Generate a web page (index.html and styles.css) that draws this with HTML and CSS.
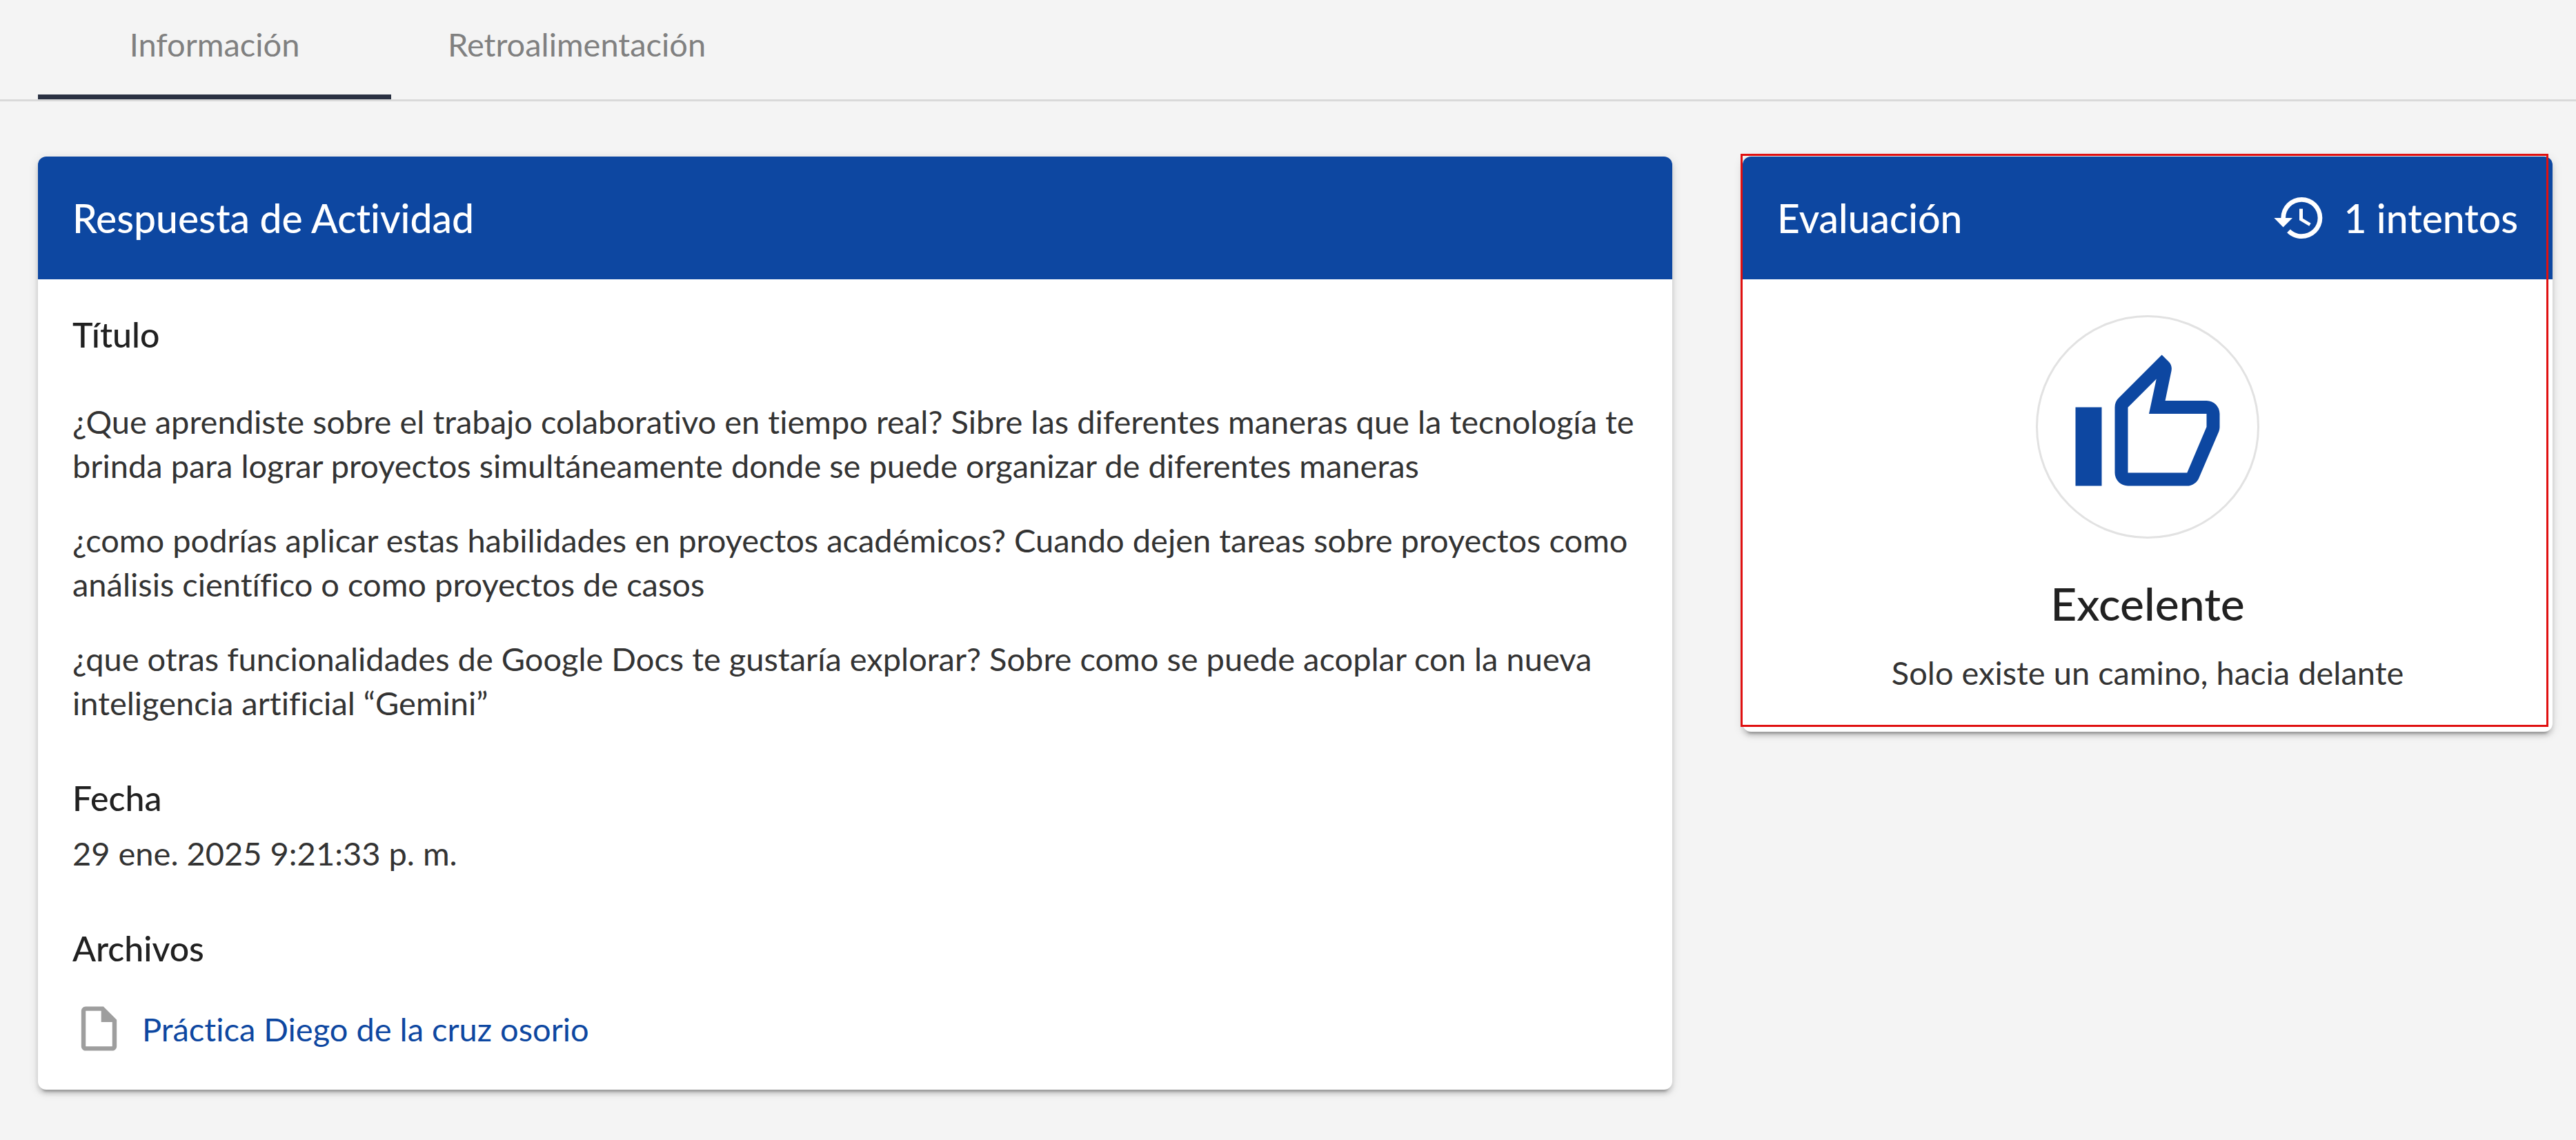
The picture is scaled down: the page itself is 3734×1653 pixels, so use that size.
FILE: index.html
```html
<!DOCTYPE html>
<html lang="es">
<head>
<meta charset="utf-8">
<meta name="viewport" content="width=device-width, initial-scale=1">
<title>Respuesta de Actividad</title>
<link rel="stylesheet" href="styles.css">
</head>
<body>
<nav class="tabs" role="tablist">
  <button class="tab tab-active" type="button" role="tab" aria-selected="true">Información</button>
  <button class="tab" type="button" role="tab" aria-selected="false">Retroalimentación</button>
</nav>
<main class="layout">
  <section class="card">
    <header class="card-header">
      <h2 class="card-title">Respuesta de Actividad</h2>
    </header>
    <div class="card-body">
      <h3 class="label">Título</h3>
      <div class="answer">
        <p>¿Que aprendiste sobre el trabajo colaborativo en tiempo real? Sibre las diferentes maneras que la tecnología te brinda para lograr proyectos simultáneamente donde se puede organizar de diferentes maneras</p>
        <p>¿como podrías aplicar estas habilidades en proyectos académicos? Cuando dejen tareas sobre proyectos como análisis científico o como proyectos de casos</p>
        <p>¿que otras funcionalidades de Google Docs te gustaría explorar? Sobre como se puede acoplar con la nueva inteligencia artificial “Gemini”</p>
      </div>
      <h3 class="label">Fecha</h3>
      <p class="date">29 ene. 2025 9:21:33 p. m.</p>
      <h3 class="label">Archivos</h3>
      <div class="file">
        <svg class="file-icon" viewBox="0 0 24 24" aria-hidden="true"><path d="M14 2H6C4.900 2 4 2.900 4 4V20C4 21.100 4.900 22 6 22H18C19.100 22 20 21.100 20 20V8L14 2M18 20H6V4H13V9H18V20Z"/></svg>
        <a class="file-link" href="#">Práctica Diego de la cruz osorio</a>
      </div>
    </div>
  </section>
  <aside class="card evaluation">
    <header class="card-header">
      <h2 class="card-title">Evaluación</h2>
      <div class="attempts">
        <svg class="history-icon" viewBox="0 0 24 24" aria-hidden="true"><path d="M13.500 8H12V13L16.280 15.540L17 14.330L13.500 12.250V8M13 3A9 9 0 0 0 4 12H1L4.960 16.030L9 12H6A7 7 0 0 1 13 5A7 7 0 0 1 20 12A7 7 0 0 1 13 19C11.070 19 9.320 18.210 8.060 16.940L6.640 18.360C8.270 20 10.500 21 13 21A9 9 0 0 0 22 12A9 9 0 0 0 13 3"/></svg>
        <span>1 intentos</span>
      </div>
    </header>
    <div class="card-body result">
      <div class="badge">
        <svg class="thumb-icon" viewBox="0 0 24 24" aria-hidden="true"><path d="M5 9V21H1V9H5M9 21A2 2 0 0 1 7 19V9C7 8.450 7.220 7.950 7.590 7.590L14.170 1L15.230 2.060C15.500 2.330 15.670 2.700 15.670 3.110L15.640 3.430L14.690 8H21C22.110 8 23 8.900 23 10V12C23 12.260 22.950 12.500 22.860 12.730L19.840 19.780C19.540 20.500 18.830 21 18 21H9M9 19H18.030L21 12V10H12.210L13.340 4.680L9 9.030V19Z"/></svg>
      </div>
      <h3 class="grade">Excelente</h3>
      <p class="comment">Solo existe un camino, hacia delante</p>
    </div>
    <div class="highlight"></div>
  </aside>
</main>
</body>
</html>
```
FILE: styles.css
```css
:root {
  --blue: #0d47a1;
  --ink: #212121;
}

* {
  box-sizing: border-box;
}

body {
  margin: 0;
  background: #f4f4f4;
  color: #333;
  font: 400 47px/64px Lato, "Open Sans", sans-serif;
  font-variant-ligatures: none;
}

h2, h3, p {
  margin: 0;
}

/* Tab bar */
.tabs {
  display: flex;
  padding-left: 55px;
  border-bottom: 3px solid #d9d9d9;
}

.tab {
  min-width: 512px;
  padding: 32px 82px 41px;
  border: 0;
  border-bottom: 7px solid transparent;
  background: none;
  color: #808080;
  font: inherit;
}

.tab-active {
  border-bottom-color: #2a3142;
}

/* Cards */
.layout {
  display: grid;
  grid-template-columns: 2369fr 1174fr;
  align-items: start;
  gap: 102px;
  padding: 80px 34px 72px 55px;
}

.card {
  border-radius: 12px;
  background: #fff;
  box-shadow: 0 9px 3px -6px rgba(0, 0, 0, .2), 0 6px 6px rgba(0, 0, 0, .14), 0 3px 15px rgba(0, 0, 0, .12);
}

.card-header {
  display: flex;
  align-items: center;
  justify-content: space-between;
  height: 178px;
  padding: 0 50px;
  border-radius: 12px 12px 0 0;
  background: var(--blue);
  color: #fff;
  font-size: 57px;
}

.card-title {
  font-size: 57px;
  font-weight: 500;
}

.card-body {
  padding: 50px;
}

.label {
  color: var(--ink);
  font-size: 50px;
  font-weight: 500;
  line-height: 60px;
}

.answer {
  display: grid;
  gap: 44px;
  margin: 64px 0 76px;
}

.date {
  margin: 18px 0 76px;
}

.file {
  display: flex;
  align-items: center;
  gap: 24px;
  margin-top: 48px;
}

.file-icon {
  width: 77px;
  height: 77px;
  fill: #9e9e9e;
}

.file-link {
  color: var(--blue);
  text-decoration: none;
}

/* Evaluation */
.evaluation {
  position: relative;
}

.attempts {
  display: flex;
  align-items: center;
  gap: 24px;
  font-weight: 500;
}

.history-icon {
  width: 80px;
  height: 80px;
  fill: #fff;
}

.result {
  display: flex;
  flex-direction: column;
  align-items: center;
  padding: 52px 50px 54px;
  text-align: center;
}

.badge {
  display: flex;
  align-items: center;
  justify-content: center;
  width: 324px;
  height: 324px;
  border: 3px solid #e2e2e2;
  border-radius: 50%;
}

.thumb-icon {
  width: 228px;
  height: 228px;
  fill: var(--blue);
}

.grade {
  margin: 54px 0 28px;
  color: var(--ink);
  font-size: 66px;
  font-weight: 500;
  line-height: 80px;
}

.highlight {
  position: absolute;
  inset: -4px 6px 7px -3px;
  border: 3px solid #e01010;
  pointer-events: none;
}
```
